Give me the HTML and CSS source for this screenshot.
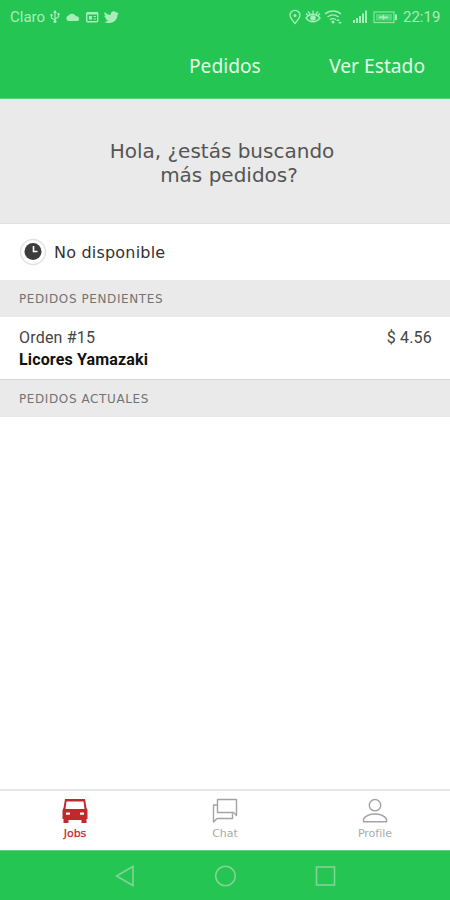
FILE: index.html
```html
<!DOCTYPE html>
<html lang="es">
<head>
<meta charset="utf-8">
<title>Pedidos</title>
<link rel="stylesheet" href="styles.css">
</head>
<body>
<div class="screen">
  <div class="status">
    <span class="carrier">Claro</span>
    <svg class="status-left" width="74" height="16" viewBox="0 0 74 16">
      <g fill="none" stroke="currentColor" stroke-width="1.200"><path d="M6 2v10M2.500 6v3L6 11M9.500 5v3L6 10"/></g>
      <path d="M4 4l2-3 2 3zM1.500 5h2v2h-2zM8.500 4h2v2h-2z" fill="currentColor"/><circle cx="6" cy="12.500" r="1.500" fill="currentColor"/>
      <path d="M20 12a3 3 0 0 1 .4-5.500 4.500 4.500 0 0 1 7.600.8A2.600 2.600 0 0 1 30 12z" fill="currentColor" transform="translate(-1)"/>
      <rect x="37.700" y="3.700" width="11" height="9" rx="1" fill="none" stroke="currentColor" stroke-width="1.400"/>
      <path d="M38 3h11v2.500H38zM40 7h3v3.500h-3zM44.500 7h2.500v1h-2.500zM44.500 9.500h2.500v1h-2.500z" fill="currentColor"/>
      <path d="M70 4.300l-1.600 1.600C68.600 11 64 14 59.500 14c-1.700 0-3-.4-4.300-1.200 1.500.1 3-.3 4.100-1.200-1.300-.1-2.300-.9-2.700-2l1.200-.1c-1.400-.3-2.300-1.400-2.300-2.800l1.200.3C55.400 6 55 4.400 55.800 3c1.500 1.800 3.700 3 6 3-.5-3.400 3-4.700 4.900-2.800l1.800-.7-1.100 1.600z" fill="currentColor"/>
    </svg>
    <svg class="status-right" width="112" height="18" viewBox="0 0 112 18">
      <g fill="none" stroke="currentColor" stroke-width="1.300">
        <path d="M7 15.500C4 12 2 9.500 2 7.300a5 5 0 0 1 10 0C12 9.500 10 12 7 15.500z"/>
        <path d="M18 10c4-5 10-5 14 0-4 5-10 5-14 0zM20 3.500l2 2.500M30 3.500L28 6M25 2.500V6M18 5.500l2 2M32 5.500l-2 2"/>
        <path d="M37 6c4.500-4 11.500-4 16 0M39.500 9c3.500-2.700 7.500-2.700 11 0M42 11.700c2-1.500 4-1.500 6 0"/>
        <rect x="86" y="4" width="20" height="10.500" opacity=".75"/>
      </g>
      <g fill="currentColor">
        <circle cx="7" cy="7.500" r="1.500"/><circle cx="25" cy="10" r="2.800"/><circle cx="45" cy="14" r="1.500"/><path d="M48 13l2-2 2 2zM50 14h4l-2 2z"/>
        <path d="M65 12h2v3h-2zM68 10h2v5h-2zM71 8h2v7h-2zM74 5.500h2V15h-2zM77 2.500h2V15h-2z"/>
        <path d="M88 6h16v6.500H88z" opacity=".4"/><path d="M91 8.500h3l2-2.200v2.200h4v1.700h-3L95 12.400v-2.200h-4zM107 6.500h2v5.500h-2z"/>
      </g>
    </svg>
    <span class="clock">22:19</span>
  </div>
  <header class="header">
    <h1 class="title">Pedidos</h1>
    <span class="action">Ver Estado</span>
  </header>
  <section class="greeting">Hola, ¿estás buscando<br><span class="second">más pedidos?</span></section>
  <div class="availability">
    <svg width="28" height="28" viewBox="0 0 28 28"><circle cx="14" cy="14" r="12.500" fill="#fff" stroke="#e2e2e2" stroke-width="1.500"/><circle cx="14" cy="13.500" r="8.500" fill="#3c3c3e"/><path d="M14.500 8V13.500h4" fill="none" stroke="#fff" stroke-width="1.600"/></svg>
    <span class="availability-text">No disponible</span>
  </div>
  <h2 class="section pending"><span>PEDIDOS PENDIENTES</span></h2>
  <div class="order">
    <div><div class="order-id">Orden #15</div><div class="shop">Licores Yamazaki</div></div>
    <div class="price">$ 4.56</div>
  </div>
  <h2 class="section current"><span>PEDIDOS ACTUALES</span></h2>
  <main class="empty"></main>
  <nav class="tabs">
    <div class="tab active">
      <svg width="28" height="28" viewBox="0 0 28 28"><path fill="currentColor" fill-rule="evenodd" d="M4 2h20l1.500 9 1 2v9h-1v4h-5v-3h-13v3h-5v-4h-1v-9l1-2zM5.500 4.500L4.500 12h19l-1-7.500zM5 15.500v2.200h4v-2.200zM19 15.500v2.200h4v-2.200z"/></svg>
      <span>Jobs</span>
    </div>
    <div class="tab">
      <svg width="28" height="28" viewBox="0 0 28 28"><g fill="none" stroke="#a3a3a3" stroke-width="1.400" stroke-linejoin="round"><path d="M6.500 2.500h19v16l-3-3h-16z"/><path d="M6 8H2.500v17l3.500-3.500h15.500v-5"/></g></svg>
      <span>Chat</span>
    </div>
    <div class="tab">
      <svg width="28" height="28" viewBox="0 0 28 28"><g fill="none" stroke="#a3a3a3" stroke-width="1.400"><circle cx="14" cy="8.200" r="5.700"/><path d="M2.500 24.700v-2.500c2-3.300 6-5.200 11.500-5.200s9.500 1.900 11.500 5.200v2.500z"/></g></svg>
      <span>Profile</span>
    </div>
  </nav>
  <footer class="system">
    <svg width="24" height="24" viewBox="0 0 24 24"><path d="M20 2.500v19L3.500 12z"/></svg>
    <svg width="24" height="24" viewBox="0 0 24 24"><circle cx="12.500" cy="12" r="9.800"/></svg>
    <svg width="24" height="24" viewBox="0 0 24 24"><rect x="3.500" y="3" width="18" height="18"/></svg>
  </footer>
</div>
</body>
</html>
```
FILE: styles.css
```css
* { box-sizing: border-box; }
body { margin: 0; background: #fff; font-family: "DejaVu Sans", sans-serif; }
h1, h2 { margin: 0; font-weight: 400; }
svg { display: block; flex: none; }
.screen { width: 450px; height: 900px; display: flex; flex-direction: column; overflow: hidden; }
.status { height: 33px; flex: none; display: flex; align-items: center; padding: 0 9px 0 10px; background: #24c552; color: #a9edbb; font-family: Roboto, sans-serif; font-size: 15px; }
.carrier { width: 39px; white-space: nowrap; }
.status-right { margin-left: auto; }
.clock { width: 38px; margin-left: 3px; font-size: 15px; }
.header { height: 66px; flex: none; display: grid; grid-template-columns: 1fr 72px 1fr; align-items: center; background: #24c552; border-bottom: 1px solid #5bd27c; color: #e6fbea; font-family: "Noto Sans", sans-serif; white-space: nowrap; }
.title { grid-column: 2; font-size: 19.200px; }
.action { justify-self: end; padding-right: 25px; font-size: 19.200px; }
.greeting { height: 125px; flex: none; padding: 40px 6px 0 0; background: #eaeaea; border-bottom: 1px solid #e0e0e0; color: #555; text-align: center; font-size: 20px; line-height: 24px; }
.second { padding-left: 14px; }
.availability { height: 56px; flex: none; display: flex; align-items: center; padding-left: 19px; gap: 7px; color: #333; font-size: 16px; letter-spacing: .2px; }
.section { flex: none; display: flex; align-items: center; padding-left: 19px; background: #eaeaea; color: #737373; font-size: 12px; letter-spacing: .6px; }
.pending { height: 37px; }
.current { height: 38px; border-top: 1px solid #d6d6d6; }
.order { height: 62px; flex: none; display: flex; justify-content: space-between; padding: 10px 18px 0 19px; font-family: Roboto, sans-serif; font-size: 16px; line-height: 22px; letter-spacing: .2px; color: #444; }
.shop { color: #111; font-weight: 700; letter-spacing: .15px; }
.empty { flex: 1; }
.tabs { height: 61px; flex: none; display: grid; grid-template-columns: repeat(3, 1fr); border-top: 2px solid #e6e6e6; }
.tab { display: flex; flex-direction: column; align-items: center; padding-top: 6px; color: #aaa; font-size: 11px; line-height: 17px; }
.active { color: #c02a2d; }
.active span { -webkit-text-stroke: .25px currentColor; }
.system { height: 50px; flex: none; display: flex; justify-content: center; gap: 76px; align-items: center; background: #24c552; border-top: 1px solid #5bd27c; }
.system svg { fill: none; stroke: #83d394; stroke-width: 1.600; }
```
